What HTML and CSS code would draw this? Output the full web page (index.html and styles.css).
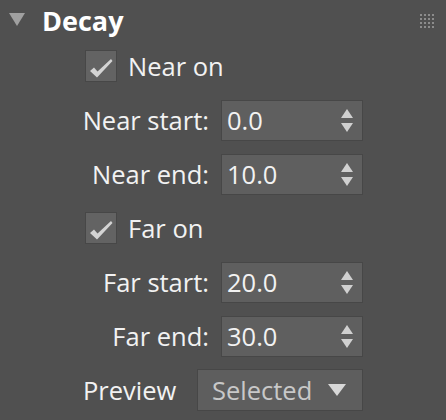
FILE: index.html
```html
<!DOCTYPE html>
<html>
<head>
<meta charset="utf-8">
<link rel="stylesheet" href="styles.css">
</head>
<body>
<div class="panel">
  <div class="header">
    <span class="caret"></span>
    <span class="title">Decay</span>
    <span class="grip">
      <svg width="14" height="14" viewBox="0 0 14 14">
        <g fill="#8c8c8c">
          <rect x="0" y="0" width="2" height="2"/><rect x="4" y="0" width="2" height="2"/><rect x="8" y="0" width="2" height="2"/><rect x="12" y="0" width="2" height="2"/>
          <rect x="0" y="4" width="2" height="2"/><rect x="4" y="4" width="2" height="2"/><rect x="8" y="4" width="2" height="2"/><rect x="12" y="4" width="2" height="2"/>
          <rect x="0" y="8" width="2" height="2"/><rect x="4" y="8" width="2" height="2"/><rect x="8" y="8" width="2" height="2"/><rect x="12" y="8" width="2" height="2"/>
          <rect x="0" y="12" width="2" height="2"/><rect x="4" y="12" width="2" height="2"/><rect x="8" y="12" width="2" height="2"/><rect x="12" y="12" width="2" height="2"/>
        </g>
      </svg>
    </span>
  </div>
  <div class="rows">
    <div class="row check-row">
      <span class="checkbox"><svg width="32" height="32" viewBox="0 0 32 32"><path d="M5 21 L9 17.5 L12.5 21.5 L26 9 L27.5 11 L12 27.5 Z" fill="#d4d4d4"/></svg></span>
      <span class="text">Near on</span>
    </div>
    <div class="row">
      <span class="label">Near start:</span>
      <span class="spinner"><span class="value">0.0</span><span class="arrows"><span class="up"></span><span class="down"></span></span></span>
    </div>
    <div class="row">
      <span class="label">Near end:</span>
      <span class="spinner"><span class="value">10.0</span><span class="arrows"><span class="up"></span><span class="down"></span></span></span>
    </div>
    <div class="row check-row">
      <span class="checkbox"><svg width="32" height="32" viewBox="0 0 32 32"><path d="M5 21 L9 17.5 L12.5 21.5 L26 9 L27.5 11 L12 27.5 Z" fill="#d4d4d4"/></svg></span>
      <span class="text">Far on</span>
    </div>
    <div class="row">
      <span class="label">Far start:</span>
      <span class="spinner"><span class="value">20.0</span><span class="arrows"><span class="up"></span><span class="down"></span></span></span>
    </div>
    <div class="row">
      <span class="label">Far end:</span>
      <span class="spinner"><span class="value">30.0</span><span class="arrows"><span class="up"></span><span class="down"></span></span></span>
    </div>
    <div class="row preview-row">
      <span class="plabel">Preview</span>
      <span class="dropdown"><span class="dvalue">Selected</span><span class="dcaret"></span></span>
    </div>
  </div>
</div>
</body>
</html>
```
FILE: styles.css
```css
html, body {
  margin: 0;
  padding: 0;
  background: #505050;
}
body {
  width: 446px;
  height: 420px;
  overflow: hidden;
  font-family: "Open Sans", "Noto Sans", sans-serif;
  font-size: 25.5px;
  color: #f2f2f2;
}
.panel {
  display: flex;
  flex-direction: column;
}
.header {
  height: 39px;
  display: flex;
  align-items: flex-start;
  position: relative;
}
.caret {
  width: 0;
  height: 0;
  border-left: 8.5px solid transparent;
  border-right: 8.5px solid transparent;
  border-top: 13px solid #a0a0a0;
  margin: 13px 0 0 9px;
}
.title {
  font-weight: 700;
  font-size: 27px;
  line-height: 44px;
  margin-left: 17px;
  margin-top: -1px;
  color: #ffffff;
}
.grip {
  position: absolute;
  left: 420px;
  top: 14px;
  line-height: 0;
}
.rows {
  display: flex;
  flex-direction: column;
}
.row {
  height: 54px;
  display: flex;
  align-items: center;
}
.check-row {
  padding-left: 85px;
  gap: 11px;
}
.checkbox {
  width: 32px;
  height: 32px;
  box-sizing: border-box;
  background: #636363;
  border: 1px solid #474747;
  line-height: 0;
  position: relative;
}
.checkbox svg {
  position: absolute;
  left: -1px;
  top: -1px;
}
.label {
  width: 209px;
  text-align: right;
  margin-right: 12px;
}
.spinner {
  width: 142px;
  height: 41px;
  box-sizing: border-box;
  background: #5f5f5f;
  border: 1px solid #474747;
  display: flex;
  align-items: center;
  padding: 0 9px 0 5px;
}
.value {
  flex: 1;
}
.arrows {
  display: flex;
  flex-direction: column;
  gap: 5px;
}
.up {
  width: 0;
  height: 0;
  border-left: 6.5px solid transparent;
  border-right: 6.5px solid transparent;
  border-bottom: 9px solid #d0d0d0;
}
.down {
  width: 0;
  height: 0;
  border-left: 6.5px solid transparent;
  border-right: 6.5px solid transparent;
  border-top: 9px solid #d0d0d0;
}
.preview-row {
  padding-left: 83px;
}
.plabel {
  width: 114px;
}
.dropdown {
  width: 166px;
  height: 42px;
  box-sizing: border-box;
  background: #5e5e5e;
  border: 1px solid #474747;
  display: flex;
  align-items: center;
  padding: 0 16px 0 14px;
}
.dvalue {
  flex: 1;
  color: #c8c8c8;
}
.dcaret {
  width: 0;
  height: 0;
  border-left: 9px solid transparent;
  border-right: 9px solid transparent;
  border-top: 12px solid #d8d8d8;
}
```
